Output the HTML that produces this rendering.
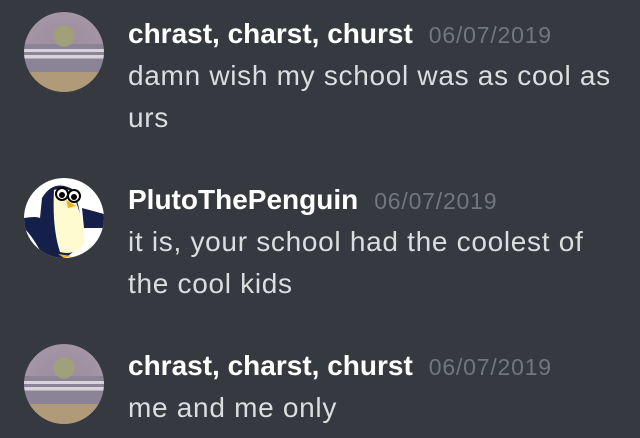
<!DOCTYPE html>
<html><head><style>
body{margin:0;width:640px;height:438px;background:#36393f;overflow:hidden;font-family:"Liberation Sans",sans-serif;position:relative}
.av{position:absolute;left:24px;width:80px;height:80px;border-radius:50%;overflow:hidden}
.frog{background:radial-gradient(circle at 50% 30%,#a0a07a 0 10px,transparent 11px),linear-gradient(180deg,transparent 0 40%,#8a8496 40% 46%,#d8d4dc 46% 50%,#8a8496 50% 54%,#d8d4dc 54% 58%,#8a8496 58% 75%,#b09a7a 75%),radial-gradient(circle at 50% 50%,#9a8a9e,#a89aa8)}
.peng{background:#fff}
.name{position:absolute;left:128px;font-weight:bold;font-size:28px;color:#fff;white-space:nowrap;letter-spacing:0}
.ts{font-weight:normal;font-size:23px;color:#72767d;margin-left:16px;letter-spacing:0.8px}
.msg{position:absolute;left:128px;font-size:28px;color:#dcddde;line-height:42px;white-space:nowrap;letter-spacing:0.7px}
</style></head><body>
<div class="av frog" style="top:12px"></div>
<div class="name" style="top:18px">chrast, charst, churst<span class="ts">06/07/2019</span></div>
<div class="msg" style="top:55px">damn wish my school was as cool as<br>urs</div>

<div class="av peng" style="top:178px"><svg width="80" height="80" viewBox="0 0 80 80"><path d="M18 20 Q30 0 50 12 Q56 30 58 50 Q60 70 40 80 L20 80 Q10 60 0 50 L0 40 Q12 38 16 40 Z" fill="#15204a"/><path d="M30 12 Q48 6 52 24 Q62 50 60 66 Q50 78 36 74 Q28 50 30 12Z" fill="#fffbd0"/><path d="M58 30 L80 36 L80 50 L60 50Z" fill="#15204a"/><circle cx="38" cy="16" r="6" fill="#fff" stroke="#000" stroke-width="2"/><circle cx="50" cy="18" r="6" fill="#fff" stroke="#000" stroke-width="2"/><circle cx="38" cy="17" r="3"/><circle cx="50" cy="19" r="3"/><path d="M42 22 L52 28 L44 30Z" fill="#f0b020"/><path d="M34 76 L48 78 L40 80Z" fill="#f0b020"/></svg></div>
<div class="name" style="top:184px">PlutoThePenguin<span class="ts">06/07/2019</span></div>
<div class="msg" style="top:221px">it is, your school had the coolest of<br>the cool kids</div>

<div class="av frog" style="top:344px"></div>
<div class="name" style="top:350px">chrast, charst, churst<span class="ts">06/07/2019</span></div>
<div class="msg" style="top:387px">me and me only</div>
</body></html>
